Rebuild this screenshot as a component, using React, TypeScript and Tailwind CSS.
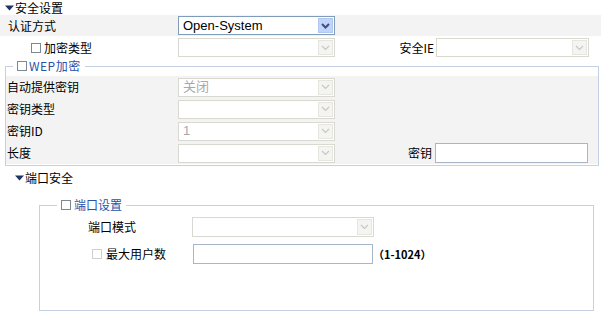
import { ReactNode } from "react"

const cn = "font-['Noto_Sans_CJK_SC',sans-serif]"

const Tri = () => (
    <svg width="9" height="6" viewBox="0 0 9 6" className="shrink-0">
        <path d="M0 0.5 H9 L4.5 5.5 Z" fill="#1d3566" />
    </svg>
)

const Box = ({ disabled }: { disabled?: boolean }) => (
    <span
        className={
            "inline-block w-[10px] h-[10px] shrink-0 bg-white border " +
            (disabled ? "border-[#cfcfcf]" : "border-[#7b8898]")
        }
    />
)

const Chevron = ({ color, sw }: { color: string; sw: number }) => (
    <svg width="9" height="6" viewBox="0 0 9 6">
        <path d="M1 1 L4.5 4.5 L8 1" fill="none" stroke={color} strokeWidth={sw} />
    </svg>
)

const Select = ({ value, disabled, w, h = "h-[19px]" }: { value?: string; disabled?: boolean; w: string; h?: string }) => (
    <div
        className={
            `${w} ${h} shrink-0 flex items-stretch bg-white border p-[1px] ` +
            (disabled ? "border-[#d9d9d2]" : "border-[#7f9db9]")
        }
    >
        <div
            className={
                "flex-1 flex items-center pl-[3px] text-[13px] font-['Liberation_Sans','Noto_Sans_CJK_SC',sans-serif] " +
                (disabled ? "text-[#a8a8a8]" : "text-black")
            }
        >
            {value}
        </div>
        <div
            className={
                "w-[15px] flex items-center justify-center border " +
                (disabled ? "bg-[#f4f4f1] border-[#e6e6e0]" : "bg-[#c3d4fa] border-[#b2c6f0]")
            }
        >
            {disabled ? <Chevron color="#c7c7c7" sw={1.2} /> : <Chevron color="#3e5080" sw={2} />}
        </div>
    </div>
)

const Input = ({ w, h = "h-[20px]" }: { w: string; h?: string }) => (
    <div className={`${w} ${h} shrink-0 bg-white border border-[#a8b6c8]`} />
)

const Row = ({ label, children }: { label: string; children: ReactNode }) => (
    <div className="h-[22px] flex items-center">
        <div className="w-[172px] pl-[1px]">{label}</div>
        {children}
    </div>
)

const App = () => {
    return (
        <div className={`w-[601px] h-[315px] bg-white text-[12px] leading-[14px] text-black overflow-hidden ${cn}`}>
            {/* 安全设置 */}
            <div className="h-[15px] flex items-center gap-[1px] pl-[5px]">
                <Tri />
                <span>安全设置</span>
            </div>
            <div className="h-[21px] flex items-center bg-[#f3f3f3]">
                <div className="w-[178px] pl-[8px]">认证方式</div>
                <Select value="Open-System" w="w-[157px]" />
            </div>
            <div className="h-[23px] flex items-center">
                <div className="w-[178px] pl-[31px] flex items-center gap-[3px]">
                    <Box />
                    <span>加密类型</span>
                </div>
                <Select disabled w="w-[157px]" />
                <div className="flex-1" />
                <span className="mr-[2px]">安全IE</span>
                <Select disabled w="w-[153px]" />
                <div className="w-[12px]" />
            </div>

            {/* WEP */}
            <fieldset className="ml-[5px] w-[594px] border border-[#c5d1e3] pb-[1px]">
                <legend className="ml-[7px] px-[4px] h-[14px] flex items-center gap-[2px]">
                    <Box />
                    <span className="text-[#2a52a8] tracking-[0.5px]">WEP加密</span>
                </legend>
                <div className="mt-[3px] bg-[#f3f3f3]">
                    <Row label="自动提供密钥">
                        <Select disabled value="关闭" w="w-[157px]" />
                    </Row>
                    <Row label="密钥类型">
                        <Select disabled w="w-[157px]" />
                    </Row>
                    <Row label="密钥ID">
                        <Select disabled value="1" w="w-[157px]" />
                    </Row>
                    <Row label="长度">
                        <Select disabled w="w-[157px]" />
                        <div className="flex-1" />
                        <span className="mr-[3px]">密钥</span>
                        <Input w="w-[153px]" />
                        <div className="w-[10px]" />
                    </Row>
                </div>
            </fieldset>

            {/* 端口安全 */}
            <div className="mt-[5px] h-[14px] flex items-center gap-[1px] pl-[15px]">
                <Tri />
                <span>端口安全</span>
            </div>
            <fieldset className="mt-[13px] ml-[39px] w-[555px] h-[113px] border border-[#c5d1e3]">
                <legend className="ml-[17px] px-[4px] h-[14px] flex items-center gap-[3px]">
                    <Box />
                    <span className="text-[#2a52a8]">端口设置</span>
                </legend>
                <div className="mt-[4px] h-[22px] flex items-center">
                    <div className="w-[152px] pl-[48px]">端口模式</div>
                    <Select disabled w="w-[182px]" h="h-[20px]" />
                </div>
                <div className="mt-[5px] h-[22px] flex items-center">
                    <div className="w-[153px] pl-[52px] flex items-center gap-[4px]">
                        <Box disabled />
                        <span>最大用户数</span>
                    </div>
                    <Input w="w-[180px]" />
                    <span className="text-[11px] font-bold">（1-1024）</span>
                </div>
            </fieldset>
        </div>
    )
}

export default App
